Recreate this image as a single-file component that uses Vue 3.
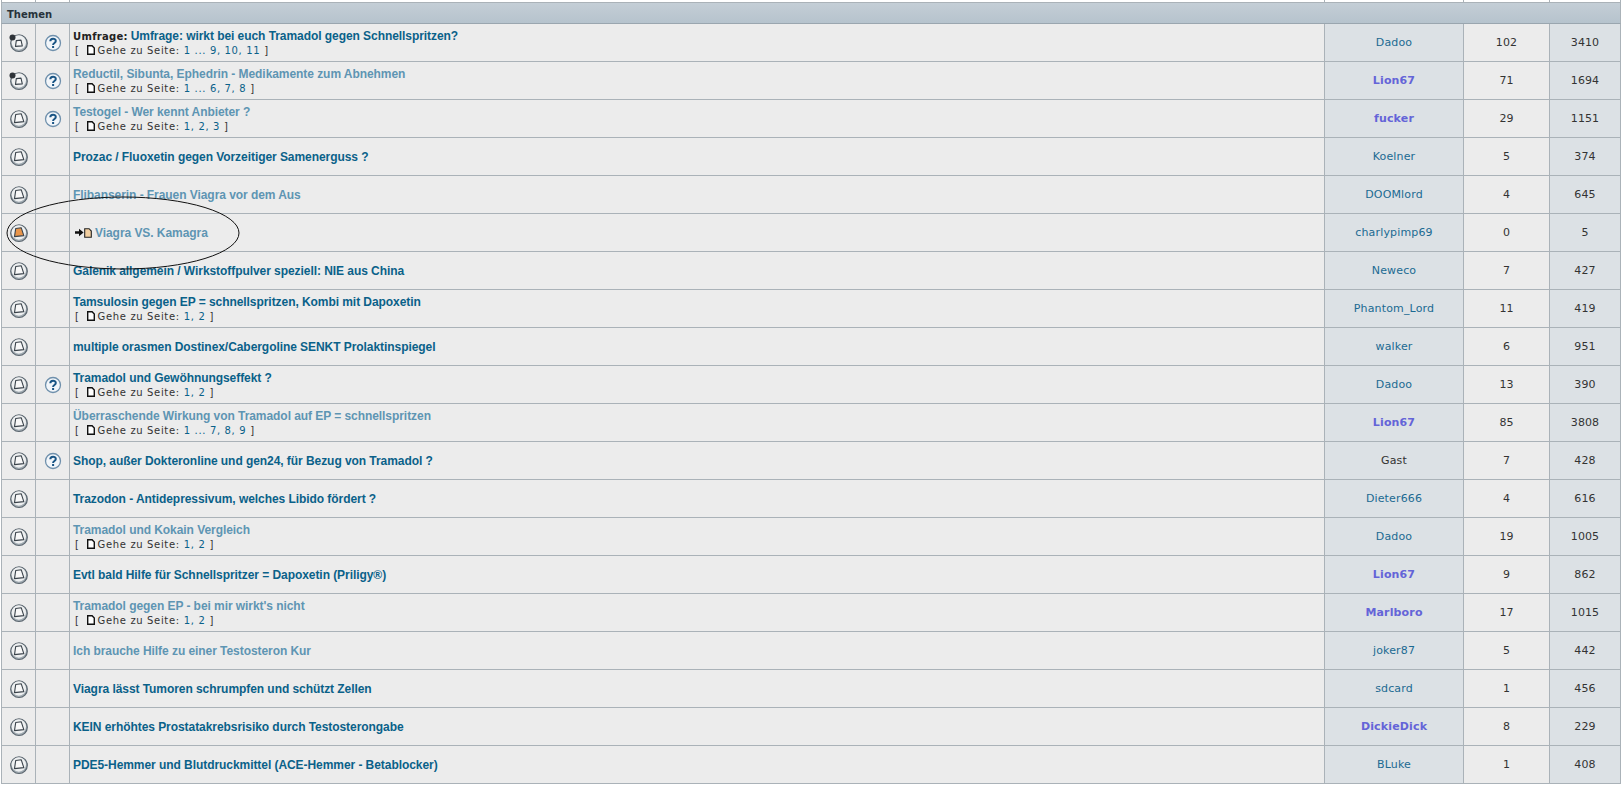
<script setup>
const topics = [
  { t: 'Umfrage: wirkt bei euch Tramadol gegen Schnellspritzen?', poll: true, q: true, hot: true, pages: '1 ... 9, 10, 11', a: 'Dadoo', r: 102, v: 3410 },
  { t: 'Reductil, Sibunta, Ephedrin - Medikamente zum Abnehmen', seen: true, q: true, hot: true, pages: '1 ... 6, 7, 8', a: 'Lion67', mod: true, r: 71, v: 1694 },
  { t: 'Testogel - Wer kennt Anbieter ?', seen: true, q: true, pages: '1, 2, 3', a: 'fucker', mod: true, r: 29, v: 1151 },
  { t: 'Prozac / Fluoxetin gegen Vorzeitiger Samenerguss ?', a: 'Koelner', r: 5, v: 374 },
  { t: 'Flibanserin - Frauen Viagra vor dem Aus', seen: true, a: 'DOOMlord', r: 4, v: 645 },
  { t: 'Viagra VS. Kamagra', seen: true, fresh: true, a: 'charlypimp69', r: 0, v: 5 },
  { t: 'Galenik allgemein / Wirkstoffpulver speziell: NIE aus China', a: 'Neweco', r: 7, v: 427 },
  { t: 'Tamsulosin gegen EP = schnellspritzen, Kombi mit Dapoxetin', pages: '1, 2', a: 'Phantom_Lord', r: 11, v: 419 },
  { t: 'multiple orasmen Dostinex/Cabergoline SENKT Prolaktinspiegel', a: 'walker', r: 6, v: 951 },
  { t: 'Tramadol und Gewöhnungseffekt ?', q: true, pages: '1, 2', a: 'Dadoo', r: 13, v: 390 },
  { t: 'Überraschende Wirkung von Tramadol auf EP = schnellspritzen', seen: true, pages: '1 ... 7, 8, 9', a: 'Lion67', mod: true, r: 85, v: 3808 },
  { t: 'Shop, außer Dokteronline und gen24, für Bezug von Tramadol ?', q: true, a: 'Gast', guest: true, r: 7, v: 428 },
  { t: 'Trazodon - Antidepressivum, welches Libido fördert ?', a: 'Dieter666', r: 4, v: 616 },
  { t: 'Tramadol und Kokain Vergleich', seen: true, pages: '1, 2', a: 'Dadoo', r: 19, v: 1005 },
  { t: 'Evtl bald Hilfe für Schnellspritzer = Dapoxetin (Priligy®)', a: 'Lion67', mod: true, r: 9, v: 862 },
  { t: "Tramadol gegen EP - bei mir wirkt's nicht", seen: true, pages: '1, 2', a: 'Marlboro', mod: true, r: 17, v: 1015 },
  { t: 'Ich brauche Hilfe zu einer Testosteron Kur', seen: true, a: 'joker87', r: 5, v: 442 },
  { t: 'Viagra lässt Tumoren schrumpfen und schützt Zellen', a: 'sdcard', r: 1, v: 456 },
  { t: 'KEIN erhöhtes Prostatakrebsrisiko durch Testosterongabe', a: 'DickieDick', mod: true, r: 8, v: 229 },
  { t: 'PDE5-Hemmer und Blutdruckmittel (ACE-Hemmer - Betablocker)', a: 'BLuke', r: 1, v: 408 },
]
</script>

<template>
  <div class="page">
    <div class="stub">
      <i></i><i></i><i></i><i></i><i></i><i></i>
    </div>
    <div class="head">Themen</div>
    <div v-for="row in topics" :key="row.t" class="row">
      <div class="cell icon-cell">
        <svg width="22" height="22" viewBox="0 0 22 22">
          <circle cx="11" cy="11.200" r="8.300" fill="#a3adb4" stroke="#5a656e" stroke-width="1.200" />
          <circle cx="10.800" cy="10.500" r="7.200" fill="#eef0f1" />
          <path v-if="row.hot" d="M8.300 8.600l4.700-.5 1.300 5.800-6.800.5z" fill="#f8f8f8" stroke="#3a434b" stroke-width="1.100" stroke-linejoin="round" />
          <path v-else d="M7.700 6.500l5.500-.8 2.600 7.900-9.300 1z" :fill="row.fresh ? '#e9954a' : '#f8f8f8'" stroke="#3a434b" stroke-width="1.100" stroke-linejoin="round" />
          <circle v-if="row.hot" cx="4.500" cy="5.500" r="3" fill="#2e3338" />
        </svg>
      </div>
      <div class="cell icon-cell">
        <svg v-if="row.q" width="18" height="18" viewBox="0 0 18 18">
          <circle cx="9" cy="9" r="7.500" fill="#f2f6fa" stroke="#6f90ac" stroke-width="1.300" />
          <path d="M6.300 7.200c0-3.400 5.500-3.300 5.500-.2 0 2-2.700 1.900-2.700 3.900" fill="none" stroke="#1a5585" stroke-width="2" />
          <rect x="8.100" y="12" width="2" height="2" fill="#1a5585" />
        </svg>
      </div>
      <div class="cell main">
        <div class="title-line">
          <span v-if="row.poll" class="poll">Umfrage: </span>
          <span v-if="row.fresh" class="newest">
            <svg width="9" height="9" viewBox="0 0 9 9"><path d="M0 3.200h4V.8L8.600 4.500 4 8.200V5.800H0z" fill="#111" /></svg>
            <svg width="8" height="10" viewBox="0 0 8 10"><path d="M.7.7h4.400L7.300 3v6.300H.7z" fill="#f3cfa0" stroke="#222" stroke-width="1.100" /></svg>
          </span>
          <a class="title" :class="{ seen: row.seen }">{{ row.t }}</a>
        </div>
        <div v-if="row.pages" class="pages">
          <span>[</span>
          <svg class="doc" width="8" height="10" viewBox="0 0 8 10"><path d="M.7.7h4.400L7.300 3v6.300H.7z" fill="#fff" stroke="#111" stroke-width="1.400" /></svg>
          <span>Gehe zu Seite:</span>
          <span class="nums">{{ row.pages }}</span>
          <span>]</span>
        </div>
      </div>
      <div class="cell alt author" :class="{ mod: row.mod, guest: row.guest }">{{ row.a }}</div>
      <div class="cell num">{{ row.r }}</div>
      <div class="cell alt num">{{ row.v }}</div>
    </div>
    <svg class="ring" width="240" height="76" viewBox="0 0 240 76">
      <ellipse cx="120" cy="38" rx="116" ry="36" fill="none" stroke="#111" stroke-width="1" />
    </svg>
  </div>
</template>

<style>
html, body { background: #fff; overflow: hidden; }
</style>

<style scoped>
.page {
  position: relative;
  width: 1623px;
  height: 785px;
  overflow: hidden;
  background: #fff;
  box-sizing: border-box;
  padding-left: 1px;
  font-family: "DejaVu Sans", Verdana, sans-serif;
  color: #333;
}
.stub, .row {
  display: grid;
  grid-template-columns: 34px 34px 1255px 139px 86px 72px;
  width: 1620px;
}
.stub { height: 2px; }
.stub i {
  border-left: 1px solid #aab2b8;
}
.stub i:last-child { border-right: 1px solid #aab2b8; }
.head {
  width: 1620px;
  height: 22px;
  box-sizing: border-box;
  padding: 5px 5px 0;
  border: 1px solid #aab2b8;
  border-bottom-color: #9aa6af;
  background: linear-gradient(#c4ced6, #b6c3cd);
  color: #27323b;
  font-size: 10px;
  font-weight: 700;
  line-height: 13px;
}
.row {
  height: 38px;
  box-sizing: border-box;
  background: #ececec;
  border-bottom: 1px solid #aab2b8;
}
.cell {
  display: flex;
  align-items: center;
  justify-content: center;
  box-sizing: border-box;
  border-left: 1px solid #aab2b8;
  min-width: 0;
}
.cell:last-child { border-right: 1px solid #aab2b8; }
.alt { background: #dce1e5; }
.main {
  flex-direction: column;
  align-items: flex-start;
  padding-left: 3px;
}
.title-line {
  display: flex;
  align-items: center;
  height: 15px;
  white-space: pre;
}
.title {
  font-family: "Liberation Sans", Arial, sans-serif;
  font-size: 12px;
  font-weight: 700;
  letter-spacing: -0.06px;
  color: #0a6189;
}
.title.seen { color: #5e95b3; }
.poll {
  font-size: 10px;
  font-weight: 700;
  letter-spacing: 0.3px;
  color: #222;
  margin-right: -1px;
}
.newest {
  display: inline-flex;
  align-items: center;
  gap: 0;
  margin: 0 3px 0 2px;
}
.pages {
  display: flex;
  align-items: center;
  gap: 4px;
  height: 13px;
  padding-left: 2px;
  font-size: 10px;
  line-height: 13px;
  letter-spacing: 0.65px;
  color: #333;
}
.doc { margin: 0 -1px 0 3px; }
.nums { color: #0a6189; }
.author {
  font-size: 11px;
  letter-spacing: 0.15px;
  color: #1b6a92;
}
.author.mod {
  color: #6464d8;
  font-weight: 700;
}
.author.guest { color: #333; }
.num { font-size: 11px; letter-spacing: 0.1px; color: #333; }
.ring {
  position: absolute;
  left: 3px;
  top: 195px;
  pointer-events: none;
}
</style>
